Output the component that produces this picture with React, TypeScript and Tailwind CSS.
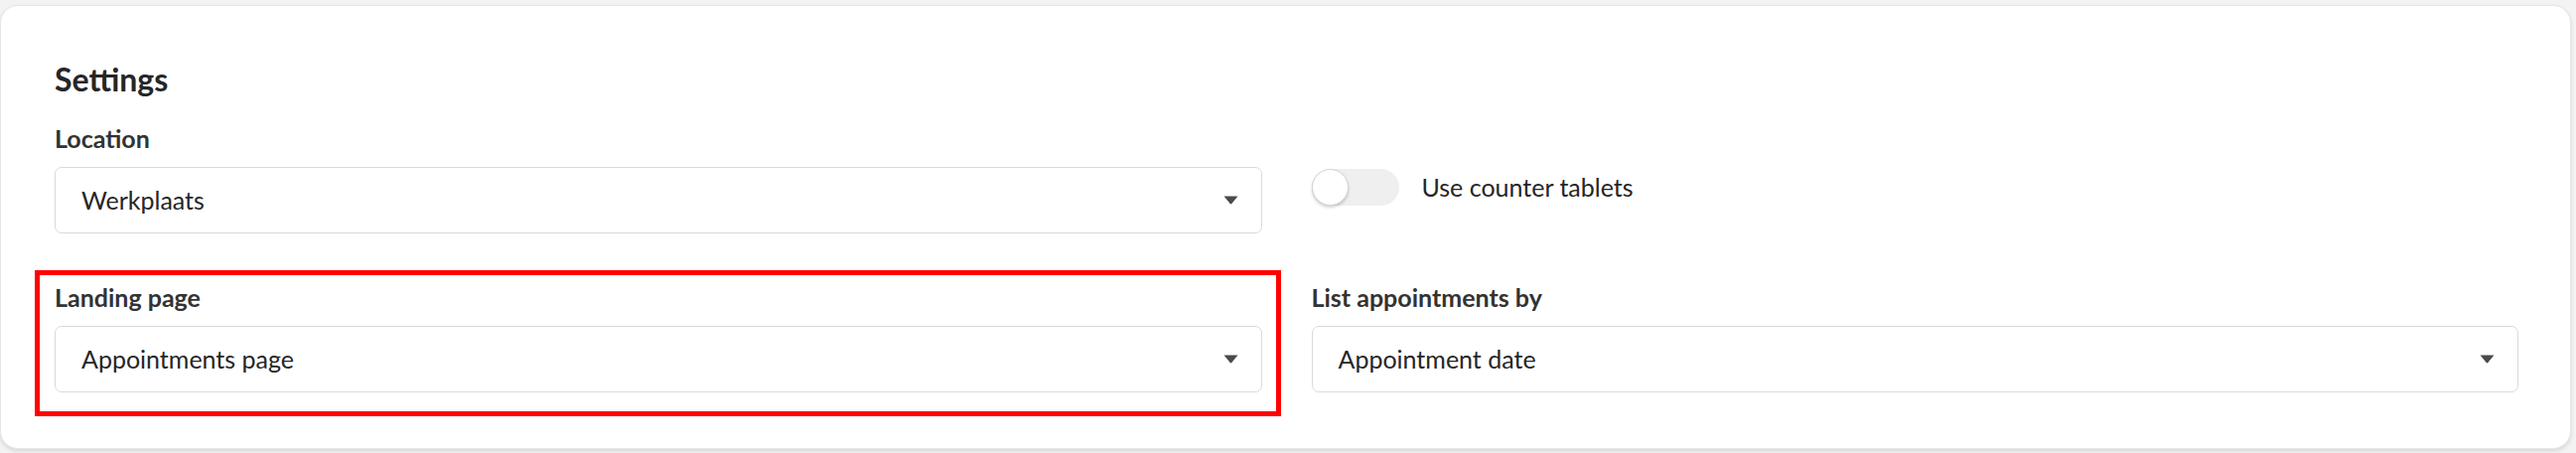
import { useState } from "react";

type SelectProps = {
    value: string;
};

const SelectBox = ({ value }: SelectProps) => (
    <div className="flex h-[67px] items-center justify-between rounded-[7px] border border-[#dadada] bg-white pl-[26px] pr-[23px]">
        <span className="text-[25px] leading-none text-[#262626]">{value}</span>
        <svg width="15" height="9" viewBox="0 0 15 9" className="shrink-0">
            <path d="M0.5 0.5 H14.5 L8.3 8 Q7.5 8.8 6.7 8 Z" fill="#4a4a4a" />
        </svg>
    </div>
);

const Field = ({ label, value }: { label: string; value: string }) => (
    <div className="flex flex-col">
        <label className="mb-[14px] text-[25px] font-bold leading-[30px] text-[#333333]">{label}</label>
        <SelectBox value={value} />
    </div>
);

const Toggle = ({ label }: { label: string }) => {
    const [on, setOn] = useState(false);

    return (
        <button onClick={() => setOn(!on)} className="flex items-center gap-[23px] text-left">
            <span className={`relative flex h-[37px] w-[88px] items-center rounded-full ${on ? "bg-[#8fb8e8]" : "bg-[#efefef]"}`}>
                <span
                    className={`h-[37px] w-[37px] rounded-full border border-[#d4d4d4] bg-white shadow-[0_2px_3px_rgba(0,0,0,0.18)] ${on ? "ml-[51px]" : "ml-0"}`}
                />
            </span>
            <span className="text-[25px] leading-none text-[#262626]">{label}</span>
        </button>
    );
};

export default function App() {
    return (
        <div className="min-h-[456px] bg-[#f3f3f3] pt-[5px] pr-[5px]" style={{ fontFamily: "Lato, 'Open Sans', sans-serif" }}>
            <section className="rounded-[18px] border border-[#e6e6e6] bg-white pl-[54px] pr-[52px] pt-[55px] pb-[56px] shadow-[0_2px_4px_rgba(0,0,0,0.12)]">
                <h2 className="mb-[25px] text-[32px] font-bold leading-[38px] text-[#262626]">Settings</h2>

                <div className="grid grid-cols-2 gap-x-[50px] gap-y-[49px]">
                    <Field label="Location" value="Werkplaats" />

                    <div className="pt-[46px]">
                        <Toggle label="Use counter tablets" />
                    </div>

                    <div className="relative">
                        <div className="pointer-events-none absolute -top-[12px] -left-[20px] -right-[19px] -bottom-[24px] border-[5px] border-[#ff0000]" />
                        <Field label="Landing page" value="Appointments page" />
                    </div>

                    <Field label="List appointments by" value="Appointment date" />
                </div>
            </section>
        </div>
    );
}
